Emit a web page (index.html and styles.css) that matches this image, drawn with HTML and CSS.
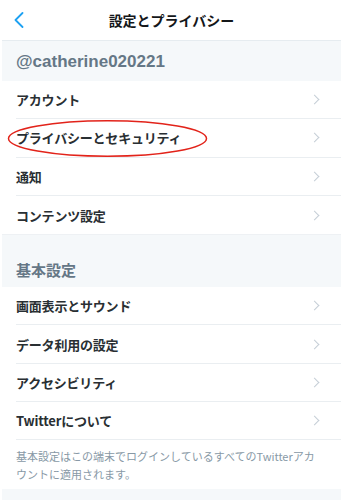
FILE: index.html
```html
<!DOCTYPE html>
<html lang="ja">
<head>
    <meta charset="UTF-8">
    <meta name="viewport" content="width=device-width, initial-scale=1.0">
    <title>設定とプライバシー</title>
    <link rel="stylesheet" href="styles.css">
</head>
<body>
    <div class="screen">
        <header class="nav">
            <svg class="back" width="10" height="16" viewBox="0 0 10 16">
                <polyline points="8.5,1 1.5,8 8.5,15" fill="none" stroke="#1da1f2" stroke-width="1.8" stroke-linecap="round" stroke-linejoin="round"/>
            </svg>
            <h1>設定とプライバシー</h1>
        </header>

        <div class="section-head handle">@catherine020221</div>
        <ul class="list">
            <li class="row"><span>アカウント</span><i class="chev"></i></li>
            <li class="row marked">
                <span>プライバシーとセキュリティ</span><i class="chev"></i>
                <svg class="circle" width="201" height="39" viewBox="0 0 201 39">
                    <ellipse cx="100.5" cy="19.5" rx="99" ry="17.8" fill="none" stroke="#e2231a" stroke-width="1.5"/>
                </svg>
            </li>
            <li class="row"><span>通知</span><i class="chev"></i></li>
            <li class="row last"><span>コンテンツ設定</span><i class="chev"></i></li>
        </ul>

        <div class="section-head group">基本設定</div>
        <ul class="list">
            <li class="row"><span>画面表示とサウンド</span><i class="chev"></i></li>
            <li class="row"><span>データ利用の設定</span><i class="chev"></i></li>
            <li class="row"><span>アクセシビリティ</span><i class="chev"></i></li>
            <li class="row"><span>Twitterについて</span><i class="chev"></i></li>
        </ul>
        <p class="note">基本設定はこの端末でログインしているすべてのTwitterアカウントに適用されます。</p>
        <div class="section-foot"></div>
    </div>
</body>
</html>
```

FILE: styles.css
```css
body {
    margin: 0;
    background: #fff;
    font-family: "Noto Sans CJK JP", "Liberation Sans", sans-serif;
    color: #14171a;
}
.screen {
    width: 339px;
    margin-left: 2px;
    height: 500px;
    overflow: hidden;
}
.nav {
    position: relative;
    height: 40px;
    display: flex;
    align-items: center;
    justify-content: center;
    border-bottom: 1px solid #e6ecf0;
}
.nav h1 {
    margin: 0;
    font-size: 14px;
    font-weight: 700;
    color: #14171a;
}
.back {
    position: absolute;
    left: 12px;
    top: 12px;
}
.section-head {
    background: #f5f8fa;
    color: #657786;
    font-weight: 700;
    padding-left: 14px;
}
.handle {
    height: 40px;
    line-height: 42px;
    font-family: "Liberation Sans", sans-serif;
    font-size: 17px;
}
.group {
    height: 53px;
    box-sizing: border-box;
    padding-top: 25px;
    line-height: 20px;
    font-size: 15px;
    border-top: 1px solid #eef1f4;
}
.list {
    list-style: none;
    margin: 0;
    padding: 0 0 0 14px;
}
.row {
    position: relative;
    height: 38.3px;
    display: flex;
    align-items: center;
    justify-content: space-between;
    border-bottom: 1px solid #eaeef1;
    box-sizing: border-box;
    font-size: 13px;
    font-weight: 700;
    letter-spacing: -0.2px;
    color: #292f33;
    padding-right: 23px;
}
.row.last {
    border-bottom: none;
}
.chev {
    width: 6px;
    height: 6px;
    border-top: 1.3px solid #c5ced6;
    border-right: 1.3px solid #c5ced6;
    transform: rotate(45deg);
}
.circle {
    position: absolute;
    left: -9px;
    top: 0;
}
.note {
    margin: 0;
    padding: 7px 16px 6px 14px;
    font-size: 11px;
    line-height: 18px;
    color: #8899a6;
}
.section-foot {
    background: #f5f8fa;
    height: 20px;
}
```
